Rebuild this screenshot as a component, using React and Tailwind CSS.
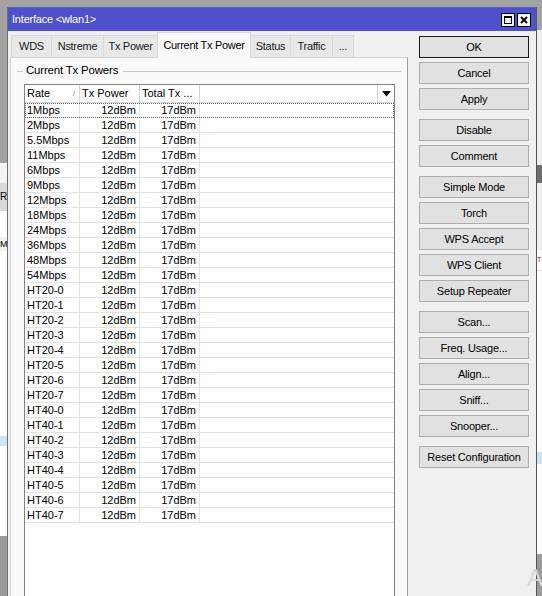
import { useState } from "react";

const tabs = [
  { label: "WDS", width: "w-[41px]" },
  { label: "Nstreme", width: "w-[53px]" },
  { label: "Tx Power", width: "w-[55px]" },
  { label: "Current Tx Power", width: "w-[94px]", active: true },
  { label: "Status", width: "w-[41px]" },
  { label: "Traffic", width: "w-[43px]" },
  { label: "...", width: "w-[22px]" },
];

const rates = [
  "1Mbps", "2Mbps", "5.5Mbps", "11Mbps", "6Mbps", "9Mbps", "12Mbps", "18Mbps",
  "24Mbps", "36Mbps", "48Mbps", "54Mbps",
  "HT20-0", "HT20-1", "HT20-2", "HT20-3", "HT20-4", "HT20-5", "HT20-6", "HT20-7",
  "HT40-0", "HT40-1", "HT40-2", "HT40-3", "HT40-4", "HT40-5", "HT40-6", "HT40-7",
];

// groups of buttons, a bigger gap between groups
const buttonGroups = [
  ["OK", "Cancel", "Apply"],
  ["Disable", "Comment"],
  ["Simple Mode", "Torch", "WPS Accept", "WPS Client", "Setup Repeater"],
  ["Scan...", "Freq. Usage...", "Align...", "Sniff...", "Snooper..."],
  ["Reset Configuration"],
];

const Tab = ({ label, width, active }) => (
  <div
    className={`${width} flex items-center justify-center border border-b-0 -mr-px tracking-[-0.3px] ${
      active
        ? "h-[26px] bg-[#f9f9f9] border-[#d4d4d4] relative z-10 -mb-px"
        : "h-[22px] bg-[#e8e8e8] border-[#d9d9d9] text-[#1a1a1a]"
    }`}
  >
    {label}
  </div>
);

const LeftStrip = () => (
  <div className="w-[7px] flex flex-col shrink-0">
    <div className="h-[163px] bg-[#a2a2a2]" />
    <div className="h-[20px] bg-[#f4f4f4]" />
    <div className="h-[28px] bg-[#dadada] text-[10px] leading-[28px] text-black">R</div>
    <div className="h-[26px] bg-white" />
    <div className="h-[14px] bg-[#f0f0f0] text-[9px] leading-[14px]">M</div>
    <div className="h-[185px] bg-white" />
    <div className="h-[10px] bg-[#cce4f7]" />
    <div className="h-[90px] bg-white" />
    <div className="flex-1 bg-[#9a9a9a]" />
  </div>
);

const RightStrip = () => (
  <div className="w-[5px] flex flex-col shrink-0">
    <div className="h-[30px] bg-[#a2a2a2]" />
    <div className="h-[135px] bg-[#f0f0f0]" />
    <div className="h-[18px] bg-[#6e6e6e]" />
    <div className="h-[67px] bg-[#f0f0f0]" />
    <div className="h-[20px] bg-white text-[7px] leading-[20px] text-[#b00000]">T</div>
    <div className="h-[182px] bg-white border-t border-[#e3e3e3]" />
    <div className="h-[12px] bg-[#cce4f7]" />
    <div className="h-[90px] bg-white" />
    <div className="flex-1 bg-[#9a9a9a]" />
  </div>
);

const App = () => {
  const [selected, setSelected] = useState(0);

  return (
    <div
      className="w-[542px] h-[596px] overflow-hidden bg-[#a2a2a2] flex items-start relative text-[11px] text-black"
      style={{ fontFamily: '"Liberation Sans", Arial, sans-serif' }}
    >
      <div className="h-[596px] flex">
        <LeftStrip />
      </div>

      <div className="w-[530px] h-[620px] shrink-0 mt-[7px] flex flex-col border-l border-[#707070] border-r border-r-[#555]">
        {/* title bar */}
        <div className="h-[24px] bg-[#4e51cb] flex items-center justify-between pl-[4px] pr-[5px] border-t border-[#5a5dd0]">
          <span className="text-white text-[11px] tracking-[-0.2px]">Interface &lt;wlan1&gt;</span>
          <div className="flex gap-[2px]">
            <div className="w-[14px] h-[14px] bg-[#f0f0f0] border border-black flex items-center justify-center">
              <div className="w-[8px] h-[8px] border border-black border-t-2" />
            </div>
            <div className="w-[14px] h-[14px] bg-[#f0f0f0] border border-black flex items-center justify-center">
              <svg width="8" height="8" viewBox="0 0 8 8">
                <path d="M1 1L7 7M7 1L1 7" stroke="black" strokeWidth="1.8" />
              </svg>
            </div>
          </div>
        </div>

        {/* body */}
        <div className="flex-1 bg-[#f0f0f0] flex">
          {/* left: tabs + panel */}
          <div className="w-[400px] flex flex-col pl-[2px]">
            <div className="h-[26px] flex items-end pl-[1px]">
              {tabs.map((tab) => (
                <Tab key={tab.label} {...tab} />
              ))}
            </div>
            <div className="flex-1 bg-[#f9f9f9] border border-[#d4d4d4] border-r-[#a0a0a0] flex flex-col">
              {/* group title */}
              <div className="h-[26px] flex items-center pl-[6px] pr-[6px] gap-[3px]">
                <div className="w-[6px] h-px bg-[#c8c8c8]" />
                <span className="text-[11.5px] tracking-[-0.2px]">Current Tx Powers</span>
                <div className="flex-1 h-px bg-[#c8c8c8] ml-[2px]" />
              </div>

              {/* table */}
              <div className="ml-[13px] w-[371px] flex-1 border border-[#828282] bg-white flex flex-col">
                <div className="h-[18px] flex border-b border-[#d5d5d5] bg-white">
                  <div className="w-[55px] border-r border-[#d5d5d5] pl-[2px] flex items-center justify-between pr-[4px]">
                    <span>Rate</span>
                    <span className="text-[8px] text-[#888]">/</span>
                  </div>
                  <div className="w-[60px] border-r border-[#d5d5d5] pl-[2px] flex items-center">Tx Power</div>
                  <div className="w-[60px] border-r border-[#d5d5d5] pl-[2px] flex items-center">Total Tx ...</div>
                  <div className="flex-1 border-r border-[#d5d5d5]" />
                  <div className="w-[16px] flex items-center justify-center">
                    <svg width="9" height="6" viewBox="0 0 9 6">
                      <path d="M0 0H9L4.5 5.5Z" fill="black" />
                    </svg>
                  </div>
                </div>

                {rates.map((rate, i) => (
                  <div
                    key={rate}
                    onClick={() => setSelected(i)}
                    className={`h-[15px] flex border-b border-[#e3e3e3] ${
                      selected === i ? "outline outline-1 outline-dotted outline-[#666] -outline-offset-1" : ""
                    }`}
                  >
                    <div className="w-[55px] border-r border-[#e3e3e3] pl-[2px] flex items-center">{rate}</div>
                    <div className="w-[60px] border-r border-[#e3e3e3] pr-[3px] flex items-center justify-end">12dBm</div>
                    <div className="w-[60px] border-r border-[#e3e3e3] pr-[3px] flex items-center justify-end">17dBm</div>
                    <div className="flex-1" />
                  </div>
                ))}
              </div>
            </div>
          </div>

          {/* right: buttons */}
          <div className="flex-1 pl-[11px] pt-[5px] flex flex-col gap-[9px]">
            {buttonGroups.map((group, gi) => (
              <div key={gi} className="flex flex-col gap-[4px]">
                {group.map((label) => (
                  <button
                    key={label}
                    className={`w-[110px] h-[22px] text-[11px] tracking-[-0.2px] bg-[#e1e1e1] border ${
                      label === "OK" ? "border-[#1a1a1a]" : "border-[#adadad]"
                    }`}
                  >
                    {label}
                  </button>
                ))}
              </div>
            ))}
          </div>
        </div>
      </div>

      <div className="h-[596px] flex">
        <RightStrip />
      </div>

      <span className="absolute left-[527px] top-[560px] text-[24px] text-[#d8d8d8]">A</span>
    </div>
  );
};

export default App;
